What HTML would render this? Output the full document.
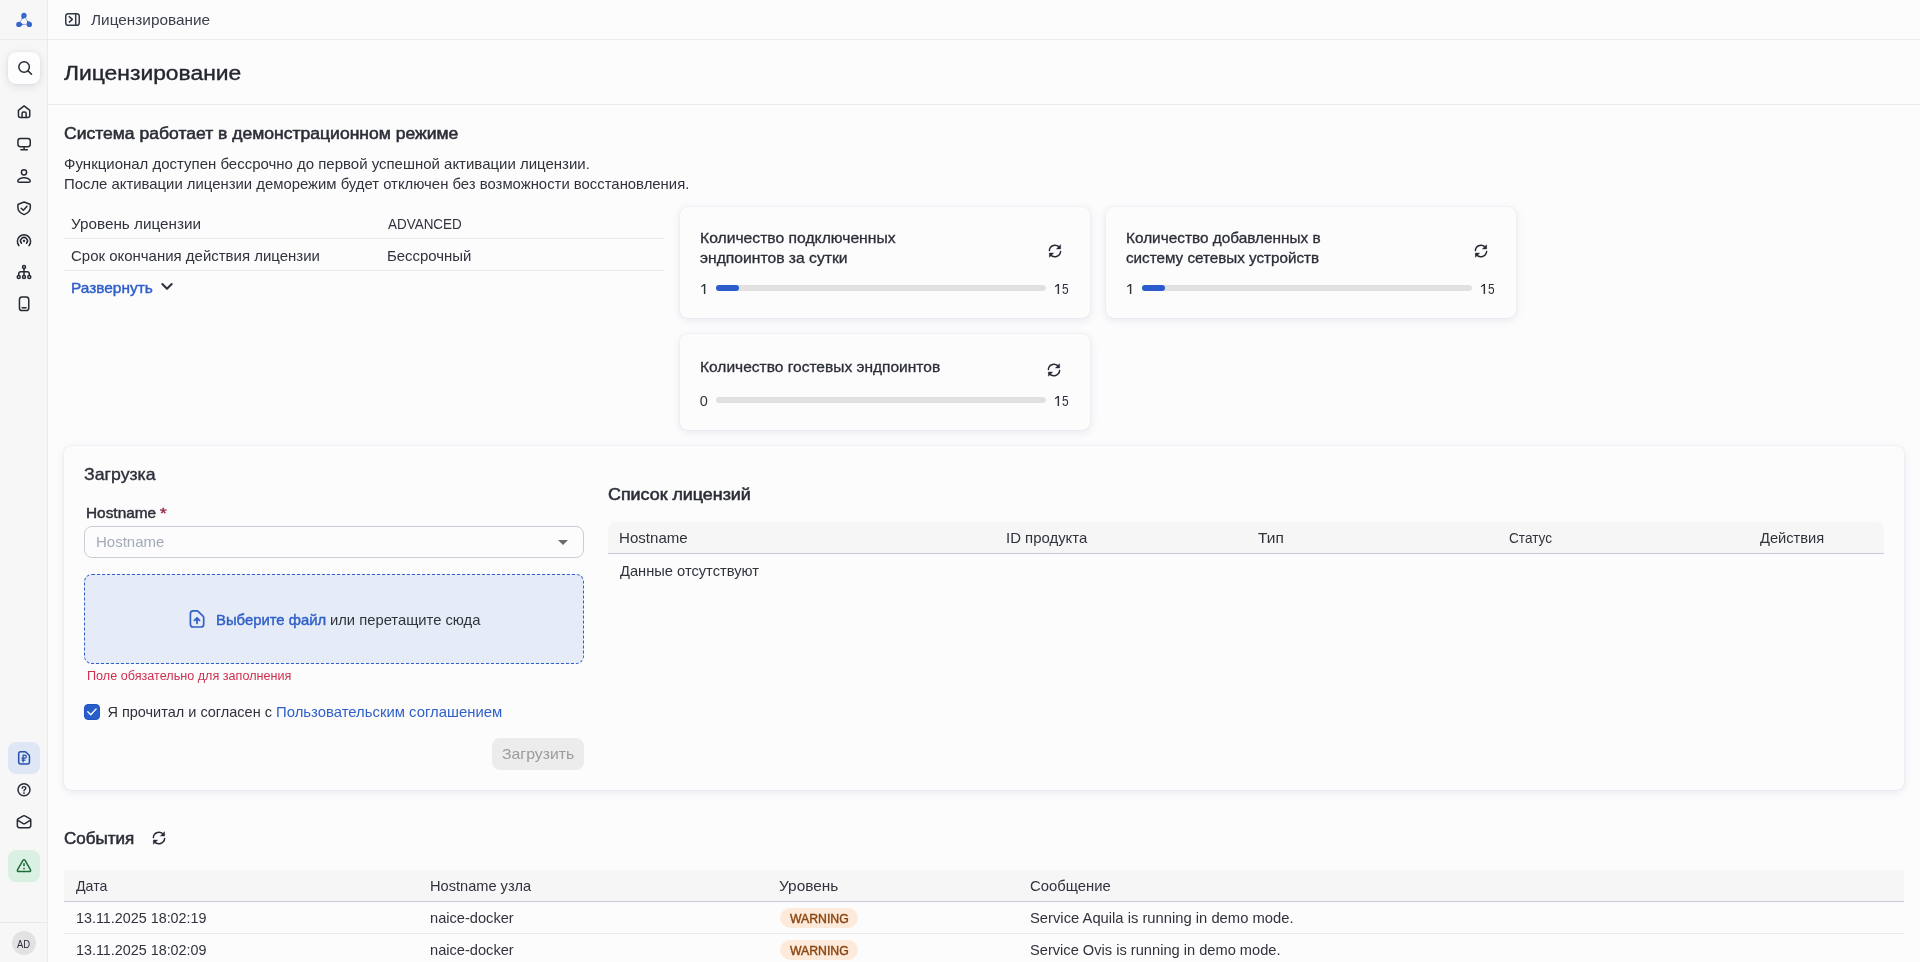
<!DOCTYPE html>
<html lang="ru">
<head>
<meta charset="utf-8">
<title>Лицензирование</title>
<style>
*{box-sizing:border-box;margin:0;padding:0}
html,body{width:1920px;height:962px;overflow:hidden}
body{position:relative;background:#fcfcfd;font-family:"Liberation Sans",sans-serif;color:#30333c}
#app{position:absolute;left:0;top:0;width:1920px;height:962px;will-change:transform}
.abs{position:absolute}
.t{position:absolute;white-space:nowrap;line-height:20px;transform-origin:0 50%}
svg{position:absolute;overflow:visible}
.ico{fill:none;stroke:#262a34;stroke-width:1.5;stroke-linecap:round;stroke-linejoin:round}
/* sidebar */
#sidebar{left:0;top:0;width:48px;height:962px;background:#f7f7f7;border-right:1px solid #e9ebf0}
#sb-logo-line{left:0;top:39px;width:47px;height:1px;background:#e9ebf0}
#sb-search{left:8px;top:52px;width:32px;height:32px;border-radius:8px;background:#fdfdfd;box-shadow:0 2px 8px rgba(70,80,110,.16),0 0 2px rgba(70,80,110,.08)}
#sb-active{left:8px;top:742px;width:32px;height:32px;border-radius:8px;background:#dfe6f5}
#sb-warn{left:8px;top:850px;width:32px;height:32px;border-radius:8px;background:#d9f0e2}
#sb-foot-line{left:0;top:922px;width:47px;height:1px;background:#e6e8ef}
#sb-avatar{left:12px;top:931px;width:24px;height:24px;border-radius:50%;background:#e2e2e3}
/* top bar + title */
#topbar-line{left:48px;top:39px;width:1872px;height:1px;background:#eaecf0}
#title-line{left:48px;top:104px;width:1872px;height:1px;background:#e9ebf0}
/* info rows */
.hr{position:absolute;left:64px;width:600px;height:1px;background:#e6e8ee}
/* cards */
.card{position:absolute;border-radius:8px;background:#fcfcfd;box-shadow:0 2px 8px rgba(80,90,120,.13),0 0 2px rgba(80,90,120,.10)}
.bar{position:absolute;height:6px;border-radius:3px;background:#e1e1e2}
.bar>i{position:absolute;left:0;top:0;height:6px;border-radius:3px;background:#2a5ccb}
/* upload form */
#f-input{left:84px;top:526px;width:500px;height:32px;border:1px solid #c9cdd8;border-radius:8px;background:#fcfcfd}
#f-caret{left:558px;top:540px;width:0;height:0;border-left:5px solid transparent;border-right:5px solid transparent;border-top:5px solid #6b6b6c}
#f-drop{left:84px;top:574px;width:500px;height:90px;border:1px dashed #2f5fc9;border-radius:8px;background:#e6ecf7}
#f-check{left:84px;top:704px;width:16px;height:16px;border-radius:4px;background:#285ec9;border:1px solid #1f54c2}
#f-btn{left:492px;top:738px;width:92px;height:32px;border-radius:8px;background:#ececed}
/* tables */
.thead{position:absolute;background:#f6f6f7}
.thline{position:absolute;height:1px;background:#c5cad8}
.trline{position:absolute;height:1px;background:#e6e8ee}
.badge{position:absolute;width:78px;height:20px;border-radius:10px;background:#fdeadb}
</style>
</head>
<body>
<div id="app">

<!-- ============ SIDEBAR ============ -->
<nav id="sidebar" class="abs"></nav>
<div id="sb-logo-line" class="abs"></div>
<div id="sb-search" class="abs"></div>
<div id="sb-active" class="abs"></div>
<div id="sb-warn" class="abs"></div>
<div id="sb-foot-line" class="abs"></div>
<div id="sb-avatar" class="abs"></div>
<!-- logo -->
<svg style="left:16px;top:12px" width="16" height="16" viewBox="0 0 16 16">
  <path d="M8 3.45L2.85 12.4H13.35Z" fill="none" stroke="#5f87da" stroke-width="0.65"/>
  <g fill="#3767cd">
    <circle cx="8" cy="3.45" r="2.65"/><circle cx="2.85" cy="12.4" r="2.65"/><circle cx="13.35" cy="12.4" r="2.65"/>
    <path d="M5.38 3.82L5.88 7.13L9.00 5.91ZM4.48 14.49L7.10 12.40L4.48 10.31ZM14.31 9.93L11.17 8.75L10.72 12.07Z"/>
  </g>
</svg>
<!-- search -->
<svg class="ico" style="left:16px;top:60px" width="16" height="16" viewBox="0 0 16 16">
  <circle cx="8.1" cy="7" r="5.25"/><path d="M12 10.9L15.5 14.2"/>
</svg>
<!-- home -->
<svg class="ico" style="left:16px;top:104px" width="16" height="16" viewBox="0 0 16 16">
  <path d="M2.45 6.3L8.1 1.95L13.75 6.3V11.6Q13.75 13.55 11.8 13.55H4.4Q2.45 13.55 2.45 11.6Z"/>
  <path d="M6.05 13.5V9.6Q6.05 8.1 7.55 8.1H8.65Q10.15 8.1 10.15 9.6V13.5"/>
</svg>
<!-- monitor -->
<svg class="ico" style="left:16px;top:136px" width="16" height="16" viewBox="0 0 16 16">
  <rect x="1.95" y="2.45" width="12.3" height="8.2" rx="2.4"/>
  <path d="M8.1 10.8V13.6M4.9 13.7H11.3"/>
</svg>
<!-- user -->
<svg class="ico" style="left:16px;top:168px" width="16" height="16" viewBox="0 0 16 16">
  <circle cx="8" cy="4.3" r="2.6"/>
  <path d="M3.2 14.25H12.8Q14.25 14.25 14.25 12.9Q14.25 11.9 12.6 10.9Q10.7 9.75 8 9.75Q5.3 9.75 3.4 10.9Q1.75 11.9 1.75 12.9Q1.75 14.25 3.2 14.25Z"/>
</svg>
<!-- shield -->
<svg class="ico" style="left:16px;top:200px" width="16" height="16" viewBox="0 0 16 16">
  <path d="M8.1 2L13.9 4.2Q14.3 4.4 14.3 4.9V7.6Q14.3 12.4 8.1 14.6Q1.9 12.4 1.9 7.6V4.9Q1.9 4.4 2.3 4.2Z"/>
  <path d="M5.2 8.2L7.4 10.3L11 6.2"/>
</svg>
<!-- radio -->
<svg class="ico" style="left:16px;top:232px" width="16" height="16" viewBox="0 0 16 16">
  <path d="M2.9 13.6A6.6 6.6 0 1 1 13.1 13.6"/>
  <path d="M5.5 11.3A3.4 3.4 0 1 1 10.5 11.3"/>
  <circle cx="8" cy="9" r="1.15" fill="#262a34" stroke="none"/>
</svg>
<!-- tree -->
<svg class="ico" style="left:16px;top:264px" width="16" height="16" viewBox="0 0 16 16" stroke-width="1.3">
  <circle cx="8" cy="3" r="1.5"/><circle cx="2.7" cy="13" r="1.5"/><circle cx="8" cy="13" r="1.5"/><circle cx="13.3" cy="13" r="1.5"/>
  <path d="M8 4.4V11.6M2.7 11.6V10Q2.7 7.8 4.9 7.8H11.1Q13.3 7.8 13.3 10V11.6"/>
</svg>
<!-- phone -->
<svg class="ico" style="left:16px;top:296px" width="16" height="16" viewBox="0 0 16 16">
  <rect x="3.45" y="1.05" width="9.3" height="13.5" rx="2.6"/><path d="M6.2 11.7H10"/>
</svg>
<!-- license doc (active) -->
<svg class="ico" style="left:16px;top:750px;stroke:#2450a8" width="16" height="16" viewBox="0 0 16 16">
  <path d="M4.6 1.85H8.9Q9.7 1.85 10.3 2.45L12.9 5.05Q13.45 5.6 13.45 6.4V11.9Q13.45 13.9 11.45 13.9H4.6Q2.7 13.9 2.7 11.9V3.85Q2.7 1.85 4.6 1.85Z"/>
  <path d="M7.1 11.9V5.2H8.7Q10.3 5.2 10.3 6.7Q10.3 8.2 8.7 8.2H6M6 10.1H9" stroke-width="1.25"/>
</svg>
<!-- help -->
<svg class="ico" style="left:16px;top:782px" width="16" height="16" viewBox="0 0 16 16">
  <circle cx="8" cy="7.8" r="6"/>
  <path d="M6.2 6.2Q6.2 4.6 8 4.6Q9.8 4.6 9.8 6.1Q9.8 7.1 8.8 7.6Q8 8 8 8.9" stroke-width="1.4"/>
  <circle cx="8" cy="11.1" r="0.95" fill="#262a34" stroke="none"/>
</svg>
<!-- mail open -->
<svg class="ico" style="left:16px;top:814px" width="16" height="16" viewBox="0 0 16 16">
  <path d="M1.35 5.9Q1.35 5.2 1.95 4.85L7.3 1.85Q8.05 1.45 8.8 1.85L14.15 4.85Q14.75 5.2 14.75 5.9V11.6Q14.75 13.65 12.7 13.65H3.4Q1.35 13.65 1.35 11.6Z"/>
  <path d="M1.9 6.3L7.2 9.6Q8.05 10.1 8.9 9.6L14.2 6.3"/>
</svg>
<!-- warning -->
<svg class="ico" style="left:16px;top:858px;stroke:#1f6b3b" width="16" height="16" viewBox="0 0 16 16">
  <path d="M6.95 2.4Q8 0.9 9.05 2.4L14.4 11.6Q15.2 13.5 13.2 13.6H2.8Q0.8 13.5 1.6 11.6Z"/>
  <path d="M8 5.9V7.5" stroke-width="1.6"/><circle cx="8" cy="10.6" r="0.95" fill="#1f6b3b" stroke="none"/>
</svg>


<!-- ============ TOP BAR / TITLE ============ -->
<div id="topbar-line" class="abs"></div>
<div id="title-line" class="abs"></div>
<!-- sidebar toggle -->
<svg class="ico" style="left:64px;top:12px;stroke:#333946" width="16" height="16" viewBox="0 0 16 16">
  <rect x="1.75" y="1.75" width="13.5" height="11.5" rx="2.6"/>
  <path d="M11.7 1.9V13.1M5.3 4.6L8.3 7.4L5.3 10.1"/>
</svg>


<!-- ============ LICENSE INFO ============ -->
<div class="hr" style="top:238px"></div>
<div class="hr" style="top:270px"></div>

<!-- ============ COUNTER CARDS ============ -->
<section class="card" style="left:680px;top:207px;width:410px;height:111px"></section>
<section class="card" style="left:1106px;top:207px;width:410px;height:111px"></section>
<section class="card" style="left:680px;top:334px;width:410px;height:96px"></section>
<div class="bar" style="left:716px;top:285px;width:330px"><i style="width:23px"></i></div>
<div class="bar" style="left:1142px;top:285px;width:330px"><i style="width:23px"></i></div>
<div class="bar" style="left:716px;top:397px;width:330px"></div>

<!-- ============ UPLOAD + LIST PANEL ============ -->
<section class="card" style="left:64px;top:446px;width:1840px;height:344px"></section>
<div id="f-input" class="abs"></div>
<div id="f-caret" class="abs"></div>
<div id="f-drop" class="abs"></div>
<div id="f-check" class="abs"></div>
<div id="f-btn" class="abs"></div>
<div class="thead" style="left:608px;top:522px;width:1276px;height:31px;border-radius:8px 8px 0 0"></div>
<div class="thline" style="left:608px;top:553px;width:1276px"></div>

<!-- ============ EVENTS ============ -->
<div class="thead" style="left:64px;top:870px;width:1840px;height:31px"></div>
<div class="thline" style="left:64px;top:901px;width:1840px"></div>
<div class="trline" style="left:64px;top:933px;width:1840px"></div>
<div class="badge" style="left:780px;top:908px"></div>
<div class="badge" style="left:780px;top:940px"></div>
<!-- refresh icons -->
<svg style="left:1047px;top:243px" width="16" height="16" viewBox="0 0 16 16">
  <g fill="none" stroke="#262a34" stroke-width="1.45" stroke-linecap="round">
    <path d="M2.35 7.6A5.75 5.75 0 0 1 12.6 4.5"/>
    <path d="M13.65 8.4A5.75 5.75 0 0 1 3.4 11.5"/>
  </g>
  <path d="M13.6 1.75V5.9H9.45Z M2.4 14.25V10.1H6.55Z" fill="#262a34" stroke="#262a34" stroke-width="0.5" stroke-linejoin="round"/>
</svg>
<svg style="left:1473px;top:243px" width="16" height="16" viewBox="0 0 16 16">
  <g fill="none" stroke="#262a34" stroke-width="1.45" stroke-linecap="round">
    <path d="M2.35 7.6A5.75 5.75 0 0 1 12.6 4.5"/>
    <path d="M13.65 8.4A5.75 5.75 0 0 1 3.4 11.5"/>
  </g>
  <path d="M13.6 1.75V5.9H9.45Z M2.4 14.25V10.1H6.55Z" fill="#262a34" stroke="#262a34" stroke-width="0.5" stroke-linejoin="round"/>
</svg>
<svg style="left:1046px;top:362px" width="16" height="16" viewBox="0 0 16 16">
  <g fill="none" stroke="#262a34" stroke-width="1.45" stroke-linecap="round">
    <path d="M2.35 7.6A5.75 5.75 0 0 1 12.6 4.5"/>
    <path d="M13.65 8.4A5.75 5.75 0 0 1 3.4 11.5"/>
  </g>
  <path d="M13.6 1.75V5.9H9.45Z M2.4 14.25V10.1H6.55Z" fill="#262a34" stroke="#262a34" stroke-width="0.5" stroke-linejoin="round"/>
</svg>
<svg style="left:151px;top:830px" width="16" height="16" viewBox="0 0 16 16">
  <g fill="none" stroke="#262a34" stroke-width="1.45" stroke-linecap="round">
    <path d="M2.35 7.6A5.75 5.75 0 0 1 12.6 4.5"/>
    <path d="M13.65 8.4A5.75 5.75 0 0 1 3.4 11.5"/>
  </g>
  <path d="M13.6 1.75V5.9H9.45Z M2.4 14.25V10.1H6.55Z" fill="#262a34" stroke="#262a34" stroke-width="0.5" stroke-linejoin="round"/>
</svg>
<!-- chevron (expand) -->
<svg class="ico" style="left:159px;top:279px;stroke-width:1.95;stroke:#2a2e38" width="16" height="16" viewBox="0 0 16 16">
  <path d="M3.3 5L8 9.7L12.7 5"/>
</svg>
<!-- upload doc -->
<svg class="ico" style="left:188px;top:609px;stroke:#3262c9;stroke-width:1.7" width="18" height="20" viewBox="0 0 18 20">
  <path d="M5.2 1.9H8.7Q9.7 1.9 10.4 2.6L15 7.1Q15.7 7.8 15.7 8.8V15.2Q15.7 18 12.9 18H5.2Q2.4 18 2.4 15.2V4.7Q2.4 1.9 5.2 1.9Z"/>
  <path d="M9 14.2V9.1M6.5 11.3L9 8.8L11.5 11.3" stroke-width="1.85"/>
</svg>
<!-- checkbox tick -->
<svg style="left:84px;top:704px" width="16" height="16" viewBox="0 0 16 16">
  <path d="M3.8 7.8L6.8 10.8L12.1 4.9" fill="none" stroke="#fff" stroke-width="1.35" stroke-linecap="round" stroke-linejoin="round"/>
</svg>
<!-- digit "1" glyphs for counters -->
<svg style="left:0;top:0" width="1920" height="962" viewBox="0 0 1920 962" fill="#30333c">
<path d="M703.88 284H705.32V294H703.88ZM703.88 284L701.05 286.25L701.55 287.15L703.88 285.45Z"/>
<path d="M1129.88 284H1131.32V294H1129.88ZM1129.88 284L1127.05 286.25L1127.55 287.15L1129.88 285.45Z"/>
<path d="M1057.63 284H1059.07V294H1057.63ZM1057.63 284L1054.80 286.25L1055.30 287.15L1057.63 285.45Z"/>
<path d="M1483.63 284H1485.07V294H1483.63ZM1483.63 284L1480.80 286.25L1481.30 287.15L1483.63 285.45Z"/>
<path d="M1057.63 396H1059.07V406H1057.63ZM1057.63 396L1054.80 398.25L1055.30 399.15L1057.63 397.45Z"/>
</svg>


<!-- ============ TEXT ============ -->
<span class="t" style="left:90.73px;top:9.98px;font-size:14.5px;color:#3a3f4b;transform:scaleX(1.0583);">Лицензирование</span>
<span class="t" style="left:63.74px;top:63.07px;font-size:20px;color:#23262f;transform:scaleX(1.1424);-webkit-text-stroke:0.35px #23262f;">Лицензирование</span>
<span class="t" style="left:63.95px;top:123.28px;font-size:16.5px;color:#2b2e37;transform:scaleX(1.0628);-webkit-text-stroke:0.55px #2b2e37;">Система работает в демонстрационном режиме</span>
<span class="t" style="left:63.62px;top:153.98px;font-size:14.5px;color:#30333c;transform:scaleX(1.0329);">Функционал доступен бессрочно до первой успешной активации лицензии.</span>
<span class="t" style="left:63.67px;top:173.98px;font-size:14.5px;color:#30333c;transform:scaleX(1.0257);">После активации лицензии деморежим будет отключен без возможности восстановления.</span>
<span class="t" style="left:71.34px;top:213.98px;font-size:14.5px;color:#30333c;transform:scaleX(1.0532);">Уровень лицензии</span>
<span class="t" style="left:387.78px;top:213.98px;font-size:14.5px;color:#30333c;transform:scaleX(0.9282);">ADVANCED</span>
<span class="t" style="left:71.45px;top:245.98px;font-size:14.5px;color:#30333c;transform:scaleX(1.0324);">Срок окончания действия лицензии</span>
<span class="t" style="left:387.45px;top:245.98px;font-size:14.5px;color:#30333c;transform:scaleX(1.0302);">Бессрочный</span>
<span class="t" style="left:71.45px;top:277.98px;font-size:14.5px;color:#2f5fc9;transform:scaleX(1.0636);-webkit-text-stroke:0.42px #2f5fc9;">Развернуть</span>
<span class="t" style="left:700.29px;top:227.98px;font-size:14.5px;color:#2b2e37;transform:scaleX(1.0816);-webkit-text-stroke:0.3px #2b2e37;">Количество подключенных</span>
<span class="t" style="left:699.76px;top:247.98px;font-size:14.5px;color:#2b2e37;transform:scaleX(1.0814);-webkit-text-stroke:0.3px #2b2e37;">эндпоинтов за сутки</span>
<span class="t" style="left:1062.29px;top:278.98px;font-size:14.5px;color:#30333c;transform:scaleX(0.8250);">5</span>
<span class="t" style="left:1126.3px;top:227.98px;font-size:14.5px;color:#2b2e37;transform:scaleX(1.0595);-webkit-text-stroke:0.3px #2b2e37;">Количество добавленных в</span>
<span class="t" style="left:1126.41px;top:247.98px;font-size:14.5px;color:#2b2e37;transform:scaleX(1.0486);-webkit-text-stroke:0.3px #2b2e37;">систему сетевых устройств</span>
<span class="t" style="left:1488.29px;top:278.98px;font-size:14.5px;color:#30333c;transform:scaleX(0.8250);">5</span>
<span class="t" style="left:700.29px;top:356.98px;font-size:14.5px;color:#2b2e37;transform:scaleX(1.0709);-webkit-text-stroke:0.3px #2b2e37;">Количество гостевых эндпоинтов</span>
<span class="t" style="left:699.79px;top:390.98px;font-size:14.5px;color:#30333c;">0</span>
<span class="t" style="left:1062.29px;top:390.98px;font-size:14.5px;color:#30333c;transform:scaleX(0.8250);">5</span>
<span class="t" style="left:83.54px;top:464.28px;font-size:16.5px;color:#2b2e37;transform:scaleX(1.0727);-webkit-text-stroke:0.35px #2b2e37;">Загрузка</span>
<span class="t" style="left:85.98px;top:502.98px;font-size:14.5px;color:#2b2e37;transform:scaleX(1.0608);-webkit-text-stroke:0.42px #2b2e37;">Hostname</span>
<span class="t" style="left:159.78px;top:502.98px;font-size:14.5px;color:#9c2542;transform:scaleX(1.1667);-webkit-text-stroke:0.42px #9c2542;">*</span>
<span class="t" style="left:95.84px;top:531.98px;font-size:14.5px;color:#a3aab8;transform:scaleX(1.0350);">Hostname</span>
<span class="t" style="left:215.83px;top:609.98px;font-size:14.5px;color:#2f5fc9;transform:scaleX(1.0236);-webkit-text-stroke:0.42px #2f5fc9;">Выберите файл</span>
<span class="t" style="left:329.68px;top:609.98px;font-size:14.5px;color:#30333c;transform:scaleX(1.0182);">или перетащите сюда</span>
<span class="t" style="left:86.84px;top:665.67px;font-size:12.5px;color:#cf2f4e;transform:scaleX(1.0099);">Поле обязательно для заполнения</span>
<span class="t" style="left:107.42px;top:701.98px;font-size:14.5px;color:#30333c;">Я прочитал и согласен с</span>
<span class="t" style="left:276.45px;top:701.98px;font-size:14.5px;color:#2f5fc9;transform:scaleX(1.0257);">Пользовательским соглашением</span>
<span class="t" style="left:501.57px;top:743.98px;font-size:14.5px;color:#9b9b9b;transform:scaleX(1.0915);">Загрузить</span>
<span class="t" style="left:608.11px;top:484.28px;font-size:16.5px;color:#2b2e37;transform:scaleX(1.0830);-webkit-text-stroke:0.55px #2b2e37;">Список лицензий</span>
<span class="t" style="left:619.45px;top:527.98px;font-size:14.5px;color:#30333c;transform:scaleX(1.0402);">Hostname</span>
<span class="t" style="left:1005.97px;top:527.98px;font-size:14.5px;color:#30333c;transform:scaleX(1.0294);">ID продукта</span>
<span class="t" style="left:1257.74px;top:527.98px;font-size:14.5px;color:#30333c;transform:scaleX(1.0656);">Тип</span>
<span class="t" style="left:1508.97px;top:527.98px;font-size:14.5px;color:#30333c;transform:scaleX(0.9395);">Статус</span>
<span class="t" style="left:1760.38px;top:527.98px;font-size:14.5px;color:#30333c;transform:scaleX(1.0107);">Действия</span>
<span class="t" style="left:620.38px;top:560.98px;font-size:14.5px;color:#30333c;transform:scaleX(1.0114);">Данные отсутствуют</span>
<span class="t" style="left:63.95px;top:828.28px;font-size:16.5px;color:#2b2e37;transform:scaleX(1.0309);-webkit-text-stroke:0.55px #2b2e37;">События</span>
<span class="t" style="left:76.34px;top:875.98px;font-size:14.5px;color:#30333c;transform:scaleX(0.9759);">Дата</span>
<span class="t" style="left:429.68px;top:875.98px;font-size:14.5px;color:#30333c;transform:scaleX(1.0072);">Hostname узла</span>
<span class="t" style="left:779.36px;top:875.98px;font-size:14.5px;color:#30333c;transform:scaleX(1.0613);">Уровень</span>
<span class="t" style="left:1030.14px;top:875.98px;font-size:14.5px;color:#30333c;transform:scaleX(1.0223);">Сообщение</span>
<span class="t" style="left:75.8px;top:907.98px;font-size:14.5px;color:#30333c;transform:scaleX(0.9889);">13.11.2025 18:02:19</span>
<span class="t" style="left:429.68px;top:907.98px;font-size:14.5px;color:#30333c;transform:scaleX(1.0084);">naice-docker</span>
<span class="t" style="left:789.83px;top:908.67px;font-size:12.5px;color:#8a4510;transform:scaleX(0.9800);-webkit-text-stroke:0.42px #8a4510;">WARNING</span>
<span class="t" style="left:1030.06px;top:907.98px;font-size:14.5px;color:#30333c;transform:scaleX(1.0184);">Service Aquila is running in demo mode.</span>
<span class="t" style="left:75.8px;top:939.98px;font-size:14.5px;color:#30333c;transform:scaleX(0.9889);">13.11.2025 18:02:09</span>
<span class="t" style="left:429.68px;top:939.98px;font-size:14.5px;color:#30333c;transform:scaleX(1.0084);">naice-docker</span>
<span class="t" style="left:789.83px;top:940.67px;font-size:12.5px;color:#8a4510;transform:scaleX(0.9800);-webkit-text-stroke:0.42px #8a4510;">WARNING</span>
<span class="t" style="left:1030.14px;top:939.98px;font-size:14.5px;color:#30333c;transform:scaleX(1.0093);">Service Ovis is running in demo mode.</span>
<span class="t" style="left:17.44px;top:933.96px;font-size:10.5px;color:#2b2f3a;transform:scaleX(0.9031);">AD</span>
</div>
</body>
</html>
